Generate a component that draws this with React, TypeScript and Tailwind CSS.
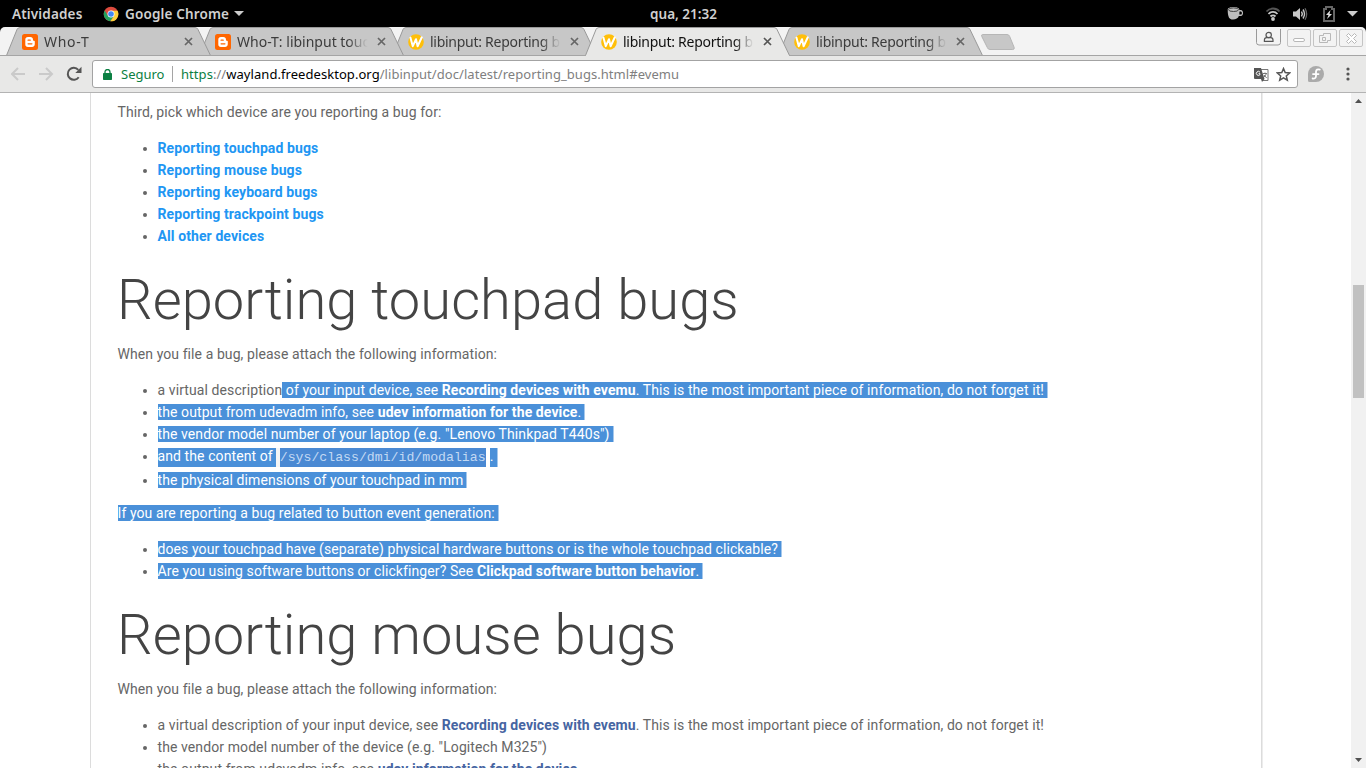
import React from "react";

const ui = "font-['Noto_Sans',sans-serif]";

function BloggerIcon() {
  return (
    <svg width="16" height="16" viewBox="0 0 16 16" className="shrink-0">
      <rect width="16" height="16" rx="2.5" fill="#ff6600" />
      <path d="M3.3 5.8A2.7 2.7 0 0 1 6 3.1h2.3A2.7 2.7 0 0 1 11 5.7c0 .8.3 1 1 1 .5 0 .8.3.8.8v2.6a2.8 2.8 0 0 1-2.8 2.8H6a2.7 2.7 0 0 1-2.7-2.7z" fill="#fff" />
      <path d="M6.1 6.2h2.1M6.1 9.8h3.8" stroke="#ff6600" strokeWidth="1.3" strokeLinecap="round" />
    </svg>
  );
}

function WaylandIcon() {
  return (
    <svg width="16" height="16" viewBox="0 0 16 16" className="shrink-0">
      <circle cx="8" cy="8" r="7.8" fill="#ffbf0a" />
      <path d="M2.4 3.6l2.4 8.6 3.2-7 1.6 7 4.2-8.9" stroke="#fff" strokeWidth="2" fill="none" strokeLinecap="round" strokeLinejoin="round" />
    </svg>
  );
}

type TabProps = { title: string; icon: React.ReactNode; active?: boolean; first?: boolean; z: string; spacing: string };

function Tab({ title, icon, active, first, z, spacing }: TabProps) {
  return (
    <div className={`relative flex h-[29px] w-[205px] shrink-0 items-center ${first ? "" : "-ml-3"} ${z}`}>
      <svg className="absolute inset-0" width="205" height="29" viewBox="0 0 205 29">
        <path d="M.5 28.5 L11 2.5 Q12 .5 14 .5 H189 Q191 .5 192 2.5 L204.5 28.5" fill={active ? "#e8e8e7" : "#c7c7c7"} stroke="#999" />
        {!active && <path d="M0 28.5H205" stroke="#a5a5a5" />}
        {active && <path d="M1 28.5H204" stroke="#e8e8e7" />}
      </svg>
      <div className="relative flex w-full items-center pl-4 pt-px">
        {icon}
        <span className={`relative ml-1.5 block h-[24px] w-[132px] overflow-hidden whitespace-nowrap pt-px text-[14px] leading-[22px] ${spacing} ${active ? "text-[#111]" : "text-[#3c3c3c]"} [mask-image:linear-gradient(to_right,black_84%,transparent_99%)]`}>
          {title}
        </span>
        <svg width="9" height="9" viewBox="0 0 9 9" className="-mt-px ml-2">
          <path d="M1 1l7 7M8 1l-7 7" stroke={active ? "#555" : "#666"} strokeWidth="1.7" />
        </svg>
      </div>
    </div>
  );
}

function SystemBar() {
  return (
    <header className="grid h-[27px] grid-cols-[1fr_auto_1fr] items-center bg-black text-[13.5px] font-semibold leading-[20px] text-[#d0d0d0]">
      <div className="flex items-center pl-3">
        <span className="w-[71px] whitespace-nowrap tracking-[0.15px]">Atividades</span>
        <svg className="ml-5" width="16" height="16" viewBox="0 0 16 16">
          <circle cx="8" cy="8" r="7.3" fill="#dd4b3e" />
          <path d="M1.7 4.4A7.3 7.3 0 0 0 7.2 15.3L11.2 9.7 8 8 4.9 9.8z" fill="#21a35d" />
          <path d="M14.6 4.8H8L11.2 9.8 7.4 15.3A7.3 7.3 0 0 0 14.6 4.8z" fill="#fdcf3b" />
          <circle cx="8" cy="8" r="3.5" fill="#fff" />
          <circle cx="8" cy="8" r="2.8" fill="#4387f4" />
        </svg>
        <span className="ml-1.5 w-[104px] whitespace-nowrap tracking-[0.15px]">Google Chrome</span>
        <svg className="ml-[5px]" width="10" height="5" viewBox="0 0 10 5"><path d="M0 0h10L5 5z" fill="#ccc" /></svg>
      </div>
      <span className="whitespace-nowrap pl-px">qua, 21:32</span>
      <div className="flex items-center justify-end pr-[9px]">
        <svg width="17" height="15" viewBox="0 0 17 15">
          <path d="M.7 3.5C.7 0 12.3 0 12.3 3.5V4h1.5c3 0 3 6 0 6h-2c-.8 4-9.4 5.5-10.4 0C.9 8 .7 6 .7 3.5z" fill="#bebebe" />
          <ellipse cx="6.5" cy="3.7" rx="5" ry="1.8" fill="none" stroke="#444" />
          <path d="M12.5 5.4h1.3c1.4 0 1.4 3.2 0 3.2h-1.5z" fill="#000" />
        </svg>
        <svg className="ml-[21px]" width="16" height="14" viewBox="0 0 16 14" fill="none">
          <path d="M1.5 4.5C5 .5 11 .5 14.5 4.5" stroke="#555" strokeWidth="1.8" />
          <path d="M3.5 7C6 4.2 10 4.2 12.5 7M5.5 9.5C7 8 9 8 10.5 9.5" stroke="#c8c8c8" strokeWidth="1.8" />
          <circle cx="8" cy="12" r="1.9" fill="#c8c8c8" />
        </svg>
        <svg className="ml-[11px]" width="16" height="14" viewBox="0 0 16 14" fill="none">
          <path d="M1 4.5h3L8 1v12L4 9.5H1z" fill="#c8c8c8" />
          <path d="M9.5 4.5q1.6 2.5 0 5M11 2.5q3 4.5 0 9" stroke="#c8c8c8" strokeWidth="1.4" />
          <path d="M13 1.2q3.3 5.8 0 11.6" stroke="#666" strokeWidth="1.3" />
        </svg>
        <svg className="ml-[15px]" width="12" height="16" viewBox="0 0 12 16">
          <path d="M3 3V1h6v2h2v12H1V3z" fill="none" stroke="#666" strokeWidth="2" />
          <path d="M7.5 4L3 9h2.5L4 13l5-5H6.5z" fill="#ddd" />
        </svg>
        <svg className="-mr-px ml-3" width="11" height="6" viewBox="0 0 11 6"><path d="M0 0h11L5.5 5.5z" fill="#ccc" /></svg>
      </div>
    </header>
  );
}

function TabStrip() {
  return (
    <div className="flex h-[29px] items-start bg-black">
      <div className="flex h-[29px] w-full items-start overflow-hidden rounded-t-[5px] bg-[#f3f3f3] pl-1.5 shadow-[inset_0_-1px_0_#a5a5a5]">
        <Tab first z="z-40" title="Who-T" icon={<BloggerIcon />} spacing="tracking-[0.7px]" />
        <Tab z="z-30" title="Who-T: libinput touchpad" icon={<BloggerIcon />} spacing="tracking-[0px]" />
        <Tab z="z-20" title="libinput: Reporting bugs" icon={<WaylandIcon />} spacing="tracking-[-0.27px]" />
        <Tab active z="z-50" title="libinput: Reporting bugs" icon={<WaylandIcon />} spacing="tracking-[-0.27px]" />
        <Tab z="z-10" title="libinput: Reporting bugs" icon={<WaylandIcon />} spacing="tracking-[-0.27px]" />
        <svg className="-ml-[3px] mt-[6px]" width="36" height="19" viewBox="0 0 36 19">
          <path d="M2.5 1.5H27q2 0 2.7 2l4.5 11q.5 2-1.5 2H10q-2 0-2.700-2l-5.500-11q-.7-2 .7-2z" fill="#c7c7c7" stroke="#b6b6b6" />
        </svg>
        <div className="ml-auto flex items-start pr-[3px] pt-0.5">
          <svg width="25" height="17" viewBox="0 0 25 17" fill="none">
            <path d="M.5 0V13.5q0 2.5 2.5 2.5H22q2.5 0 2.5-2.5V0" stroke="#999" />
            <circle cx="12.7" cy="6" r="2.7" stroke="#555" strokeWidth="1.2" />
            <path d="M8.4 12.4V11q0-2.3 2.3-2.3h4q2.3 0 2.3 2.3v1.4z" stroke="#555" strokeWidth="1.2" />
          </svg>
          <svg className="ml-1.5" width="76" height="18" viewBox="0 0 76 18" fill="none" stroke="#c4c4c4">
            <rect x=".5" y=".5" width="23" height="17" rx="1.5" />
            <rect x="26.5" y=".5" width="23" height="17" rx="1.5" />
            <rect x="52.5" y=".5" width="23" height="17" rx="1.5" />
            <rect x="6.5" y="9.5" width="11" height="3" rx="1.5" fill="#fff" stroke="#b8b8b8" />
            <path d="M36.5 4.5h7v7h-3v2h-8v-7h4zM35.5 8.5h3v3h-3z" stroke="#b8b8b8" />
            <path d="M59.5 6.5l2-2 3 3 3-3 2 2-3 3 3 3-2 2-3-3-3 3-2-2 3-3z" stroke="#b8b8b8" fill="#fff" />
          </svg>
        </div>
      </div>
    </div>
  );
}

function Toolbar() {
  return (
    <div className="flex h-[37px] items-center border-b border-[#b3b3b3] bg-[#e8e8e7]">
      <svg className="ml-[11px]" width="71" height="18" viewBox="0 0 71 18" fill="none">
        <path d="M14 9H1.5M7 3L1 9l6 6M28 9h12.5M35 3l6 6-6 6" stroke="#cacaca" strokeWidth="2" />
        <path d="M67.7 12.2A6 6 0 1 1 67.3 4.8" stroke="#555" strokeWidth="2" />
        <path d="M70.5 1.8V8h-6.2z" fill="#555" />
      </svg>
      <div className="ml-2.5 flex h-[28px] w-[1206px] items-center rounded-[3px] border border-[#a3a3a3] bg-white text-[13px] leading-[20px]">
        <svg className="ml-2.5" width="9" height="11" viewBox="0 0 9 11">
          <path d="M2 5V3a2.3 2.3 0 0 1 5 0v2" stroke="#0b8043" strokeWidth="1.3" fill="none" />
          <rect y="4" width="9" height="7" rx=".7" fill="#0b8043" />
        </svg>
        <span className="ml-[9px] w-[43px] whitespace-nowrap text-[#0b8043]">Seguro</span>
        <span className="ml-2 h-4 w-px bg-[#a5a5a5]" />
        <span className="ml-2 whitespace-nowrap tracking-[0.055px] text-[#808080]">
          <span className="text-[#0b8043]">https</span>://<span className="text-black">wayland.freedesktop.org</span>/libinput/doc/latest/reporting_bugs.html#evemu
        </span>
        <svg className="ml-auto" width="15" height="15" viewBox="0 0 15 15">
          <path d="M5 2.5h9v11H8" fill="#fff" stroke="#777" />
          <path d="M0 1h7l3.5 11H1q-1 0-1-1z" fill="#555" />
          <path d="M6 5.2A2 2 0 1 0 6 7.6V6.7H4.5" stroke="#fff" fill="none" />
          <path d="M9 6.5h4M11 5.5v1M12.2 7Q11.5 9 10 10M10 8l2.7 3" stroke="#777" fill="none" />
          <path d="M7 12h3.5L8 15z" fill="#555" />
        </svg>
        <svg className="ml-[7px] mr-1.5" width="15" height="15" viewBox="0 0 15 15">
          <path d="M7.5 1.6l1.7 4 4.4.4-3.3 2.9 1 4.3-3.8-2.3-3.8 2.3 1-4.3L1.4 6l4.4-.4z" fill="none" stroke="#555" strokeWidth="1.5" />
        </svg>
      </div>
      <svg className="ml-2.5" width="16" height="16" viewBox="0 0 16 16">
        <path d="M8 0a8 8 0 1 1 0 16H1.5Q0 16 0 14.5V8a8 8 0 0 1 8-8z" fill="#aaa" />
        <path d="M11.8 3.6Q8.3 2.6 8 5.6V10q-.2 3-3.4 2.5M5 8.1h5.5" fill="none" stroke="#fff" strokeWidth="1.8" strokeLinecap="round" />
      </svg>
      <svg className="ml-[22px]" width="4" height="14" viewBox="0 0 4 14" fill="#555">
        <circle cx="2" cy="2" r="1.6" /><circle cx="2" cy="7" r="1.6" /><circle cx="2" cy="12" r="1.6" />
      </svg>
    </div>
  );
}

function Sel({ children, end }: { children: React.ReactNode; end?: boolean }) {
  return <span className={`bg-[#4a90d9] text-white ${end ? "border-r border-[#a5c8ec] pr-[3px]" : ""}`}>{children}</span>;
}

function Item({ children, tall }: { children: React.ReactNode; tall?: boolean }) {
  return <li className={tall ? "h-6" : "h-[22px]"}>{children}</li>;
}

function List({ children }: { children: React.ReactNode }) {
  return <ul className="mt-3.5 list-disc pl-10">{children}</ul>;
}

function Heading({ children }: { children: React.ReactNode }) {
  return <h1 className="-ml-[0.5px] h-24 pt-[21px] text-[56px] font-light leading-[64px] tracking-[0.09px] text-[#444]">{children}</h1>;
}

const devices = ["Reporting touchpad bugs", "Reporting mouse bugs", "Reporting keyboard bugs", "Reporting trackpoint bugs", "All other devices"];

function Page() {
  return (
    <div className="flex min-h-0 flex-1 bg-white">
      <div className="ml-[90px] h-full w-[1173px] border-r border-[#ececec]">
        <main className="h-full overflow-hidden whitespace-nowrap border-x border-[#dcdcdc] pl-[26.5px] pt-2 font-[Roboto,sans-serif] text-[14px] leading-[22px] tracking-[0.095px] text-[#666]">
          <p>Third, pick which device are you reporting a bug for:</p>
          <List>
            {devices.map((d) => (
              <Item key={d}><a className="font-bold text-[#2196f3]">{d}</a></Item>
            ))}
          </List>
          <Heading>Reporting touchpad bugs</Heading>
          <p className="tracking-[0.08px]">When you file a bug, please attach the following information:</p>
          <List>
            <Item>a virtual description<Sel end> of your input device, see <b>Recording devices with evemu</b>. This is the most important piece of information, do not forget it!</Sel></Item>
            <Item><Sel end>the output from udevadm info, see <b>udev information for the device</b>.</Sel></Item>
            <Item><Sel end>the vendor model number of your laptop (e.g. "Lenovo Thinkpad T440s")</Sel></Item>
            <Item tall>
              <span className="flex h-[24px] items-center">
                <span className="flex h-[19px] items-center bg-[#4a90d9] pr-[3px] leading-[16px] text-white"><span className="-mt-[3px]">and the content of</span></span>
                <code className="mx-1 flex h-[19px] w-[206px] items-center bg-[#4a89d3] font-['Liberation_Mono',monospace] text-[13.2px] leading-[16px] tracking-normal text-[#c3d9f3] shadow-[-4px_0_0_#f5f5f5]">/sys/class/dmi/id/modalias</code>
                <span className="flex h-[19px] items-center border-r border-[#a5c8ec] bg-[#4a90d9] pr-[3px] leading-[16px] text-white"><span className="-mt-[3px]">.</span></span>
              </span>
            </Item>
            <Item><Sel end>the physical dimensions of your touchpad in mm</Sel></Item>
          </List>
          <p className="mt-[11px] tracking-[0.085px]"><Sel end>If you are reporting a bug related to button event generation:</Sel></p>
          <List>
            <Item><Sel end>does your touchpad have (separate) physical hardware buttons or is the whole touchpad clickable?</Sel></Item>
            <Item><Sel end>Are you using software buttons or clickfinger? See <b>Clickpad software button behavior</b>.</Sel></Item>
          </List>
          <Heading>Reporting mouse bugs</Heading>
          <p className="tracking-[0.08px]">When you file a bug, please attach the following information:</p>
          <List>
            <Item>a virtual description of your input device, see <b className="text-[#4665a2]">Recording devices with evemu</b>. This is the most important piece of information, do not forget it!</Item>
            <Item>the vendor model number of the device (e.g. "Logitech M325")</Item>
            <Item>the output from udevadm info, see <b className="text-[#4665a2]">udev information for the device</b>.</Item>
          </List>
        </main>
      </div>
      <aside className="ml-auto flex w-[15px] flex-col items-center bg-[#f1f1f1]">
        <svg className="mt-1.5" width="7" height="4" viewBox="0 0 7 4"><path d="M0 4h7L3.5 0z" fill="#505050" /></svg>
        <div className="mt-[182px] h-[113px] w-[11px] bg-[#c1c1c1]" />
        <svg className="mb-1.5 mt-auto" width="7" height="4" viewBox="0 0 7 4"><path d="M0 0h7L3.5 4z" fill="#505050" /></svg>
      </aside>
    </div>
  );
}

export default function App() {
  return (
    <div className={`flex h-[768px] w-[1366px] flex-col overflow-hidden ${ui}`}>
      <SystemBar />
      <TabStrip />
      <Toolbar />
      <Page />
    </div>
  );
}
